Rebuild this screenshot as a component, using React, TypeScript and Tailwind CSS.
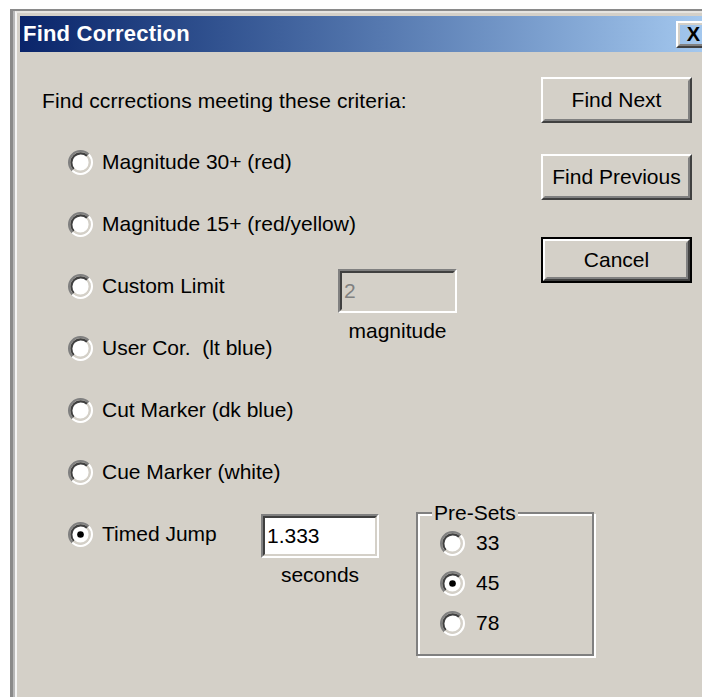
import React from "react";

// classic 3d bevels used by the dialog controls
const raised = "border-2 border-t-white border-l-white border-r-[#404040] border-b-[#404040]";
const raisedInner = "border-2 border-t-[#d4d0c8] border-l-[#d4d0c8] border-r-[#808080] border-b-[#808080]";
const sunken = "border-2 border-t-[#808080] border-l-[#808080] border-r-white border-b-white";
const sunkenInner = "border-2 border-t-[#404040] border-l-[#404040] border-r-[#d4d0c8] border-b-[#d4d0c8]";

const Radio = ({ checked }: { checked?: boolean }) => {
  return (
    <svg width="25" height="25" viewBox="0 0 24 24" className="shrink-0">
      <circle cx="12" cy="12" r="9" fill="#fff" />
      <path d="M4.22 19.78A11 11 0 0 1 19.78 4.22" stroke="#808080" strokeWidth="2" fill="none" />
      <path d="M19.78 4.22A11 11 0 0 1 4.22 19.78" stroke="#fff" strokeWidth="2" fill="none" />
      <path d="M5.64 18.36A9 9 0 0 1 18.36 5.64" stroke="#404040" strokeWidth="2" fill="none" />
      <path d="M18.36 5.64A9 9 0 0 1 5.64 18.36" stroke="#d4d0c8" strokeWidth="2" fill="none" />
      {checked && <circle cx="12" cy="12" r="3.2" fill="#000" />}
    </svg>
  );
};

const Button = ({ label, isDefault }: { label: string; isDefault?: boolean }) => {
  const body = (
    <div className={`${raised} ${isDefault ? "h-[42px]" : "h-[46px]"}`}>
      <div className={`${raisedInner} h-full flex items-center justify-center`}>{label}</div>
    </div>
  );
  if (isDefault) return <div className="border-2 border-black w-[151px]">{body}</div>;
  return <div className="w-[151px]">{body}</div>;
};

const TextBox = ({ value, disabled, width }: { value: string; disabled?: boolean; width: string }) => {
  return (
    <div className={`${sunken} ${width} h-[44px] shrink-0`}>
      <div
        className={`${sunkenInner} h-full flex items-center px-[2px] ${
          disabled ? "bg-[#d4d0c8] text-[#808080]" : "bg-white text-black"
        }`}
      >
        {value}
      </div>
    </div>
  );
};

const options = [
  "Magnitude 30+ (red)",
  "Magnitude 15+ (red/yellow)",
  "Custom Limit",
  "User Cor.  (lt blue)",
  "Cut Marker (dk blue)",
  "Cue Marker (white)",
  "Timed Jump",
];

export default function App() {
  return (
    <div
      className="w-[702px] h-[697px] overflow-hidden bg-white pl-[10px] pt-[9px] text-[21px] leading-[24px] text-black"
      style={{ fontFamily: '"Liberation Sans", Arial, sans-serif' }}
    >
      <div className="w-[720px] h-[700px] border-t-2 border-l-[3px] border-[#8a8a8a]">
        <div className="h-full border-l-2 border-[#b8b8b8]">
          <div className="h-full border-t-2 border-l-2 border-t-[#e6e4e0] border-l-[#f4f4f4]">
            <div className="h-full bg-[#d4d0c8] pt-[3px] pl-[3px]">
              {/* title bar */}
              <div className="w-[692px] h-[36px] flex items-center justify-between pl-[3px] pr-[4px] bg-gradient-to-r from-[#0a246a] to-[#a6caf0]">
                <span className="text-white font-bold text-[22px] tracking-[0.2px]">Find Correction</span>
                <div className={`${raised} w-[32px] h-[27px]`}>
                  <div className={`${raisedInner} h-full flex items-center justify-center font-bold text-[20px] pl-[3px]`}>
                    X
                  </div>
                </div>
              </div>

              <div className="flex">
                <div className="w-[521px] shrink-0 pl-[22px]">
                  <p className="mt-[37px] h-[24px] tracking-[0.1px]">Find ccrrections meeting these criteria:</p>
                  <div className="mt-[18px] pl-[26px]">
                    {options.map((label, i) => (
                      <div key={label} className="h-[62px] flex items-center">
                        <div className="flex items-center gap-[9px] w-[193px] shrink-0">
                          <Radio checked={i === 6} />
                          <span className="whitespace-pre">{label}</span>
                        </div>

                        {i === 2 && (
                          <div className="self-start mt-[14px] ml-[77px] shrink-0 flex flex-col items-center">
                            <TextBox value="2" disabled width="w-[119px]" />
                            <span className="mt-[6px]">magnitude</span>
                          </div>
                        )}

                        {i === 6 && (
                          <>
                            <div className="self-start mt-[11px] shrink-0 flex flex-col items-center">
                              <TextBox value="1.333" width="w-[118px]" />
                              <span className="mt-[5px]">seconds</span>
                            </div>
                            <fieldset className="self-start -mt-[2px] ml-[37px] shrink-0 w-[178px] h-[155px] border-2 border-[#808080] shadow-[inset_2px_2px_0_#fff,2px_2px_0_#fff] p-0">
                              <legend className="ml-[14px] px-[2px] bg-[#d4d0c8] leading-[24px]">Pre-Sets</legend>
                              <div className="pl-[22px] -mt-[2px]">
                                {["33", "45", "78"].map((v) => (
                                  <div key={v} className="h-[40px] flex items-center gap-[11px]">
                                    <Radio checked={v === "45"} />
                                    <span>{v}</span>
                                  </div>
                                ))}
                              </div>
                            </fieldset>
                          </>
                        )}
                      </div>
                    ))}
                  </div>
                </div>

                {/* command buttons */}
                <div className="flex flex-col">
                  <div className="mt-[25px]">
                    <Button label="Find Next" />
                  </div>
                  <div className="mt-[31px]">
                    <Button label="Find Previous" />
                  </div>
                  <div className="mt-[37px]">
                    <Button label="Cancel" isDefault />
                  </div>
                </div>
              </div>
            </div>
          </div>
        </div>
      </div>
    </div>
  );
}
